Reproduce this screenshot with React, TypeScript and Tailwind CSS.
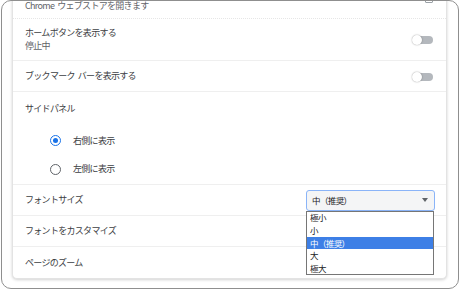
const font = { fontFamily: '"Noto Sans CJK JP", "Noto Sans", sans-serif' }

function Toggle() {
  return (
    <div className="relative flex items-center w-[21px] h-[10px]">
      <div className="ml-[4px] w-[17px] h-[8px] rounded-full bg-[#b4b8bd]" />
      <div className="absolute left-0 top-0 w-[10px] h-[10px] rounded-full bg-white shadow-[0_0_1.5px_rgba(0,0,0,0.45)]" />
    </div>
  )
}

function Radio({ checked }: { checked?: boolean }) {
  return checked ? (
    <div className="w-[11px] h-[11px] rounded-full border-[1.5px] border-[#1a73e8] flex items-center justify-center">
      <div className="w-[5px] h-[5px] rounded-full bg-[#1a73e8]" />
    </div>
  ) : (
    <div className="w-[11px] h-[11px] rounded-full border-[1.5px] border-[#5f6368]" />
  )
}

const sizes = ['極小', '小', '中（推奨）', '大', '極大']

export default function App() {
  return (
    <div className="w-[460px] h-[290px] bg-white" style={font}>
      <div className="ml-[1px] w-[458px] h-[289px] rounded-[10px] border border-[#8f8f8f] overflow-hidden pl-[10px]">
        <div className="-mt-[13px] w-[435px] bg-white border-x border-b border-[#e3e3e3] rounded-b-[5px] shadow-[0_1px_3px_rgba(0,0,0,0.18)] text-[9px] tracking-[-0.7px] text-[#3c4043]">
          {/* cut-off row */}
          <div className="h-[31px] flex items-end justify-between pl-[12px] pr-[13px] border-b border-dotted border-[#e6e6e6]">
            <span className="mb-[6px] text-[#5f6368]">Chrome<span className="ml-[3px]">ウェブストアを開きます</span></span>
            <div className="mb-[15px] w-[8px] h-[8px] border border-[#9aa0a6] rounded-[1px]" />
          </div>

          <div className="h-[42px] flex items-center justify-between pl-[12px] pr-[13px] border-b border-[#efefef]">
            <div className="flex flex-col leading-[13px] -mt-[1px]">
              <span>ホームボタンを表示する</span>
              <span className="text-[#5f6368]">停止中</span>
            </div>
            <Toggle />
          </div>

          <div className="h-[31px] flex items-center justify-between pl-[12px] pr-[13px] border-b border-[#efefef]">
            <span>ブックマーク<span className="ml-[3px]">バーを表示する</span></span>
            <div className="mt-[1px]"><Toggle /></div>
          </div>

          <div className="h-[93px] flex flex-col pl-[12px] border-b border-[#efefef]">
            <div className="h-[34px] flex items-center">サイドパネル</div>
            <div className="h-[30px] flex items-center pl-[25px] gap-[12px]">
              <Radio checked />
              <span>右側に表示</span>
            </div>
            <div className="h-[30px] flex items-center pl-[25px] gap-[12px] -mt-[1px]">
              <Radio />
              <span>左側に表示</span>
            </div>
          </div>

          <div className="h-[31px] flex items-center justify-between pl-[12px] pr-[11px] border-b border-[#efefef]">
            <span>フォントサイズ</span>
            <div className="relative">
              <div className="w-[129px] h-[21px] rounded-[3px] border border-[#8ab4f8] bg-[#f4f5f6] flex items-center justify-between pl-[5px] pr-[6px] text-[8.5px] tracking-[-0.6px] text-[#202124]">
                <span>中（推奨）</span>
                <div className="w-0 h-0 border-x-[3.5px] border-x-transparent border-t-[4px] border-t-[#5f6368]" />
              </div>
              <div className="absolute left-0 top-full w-[128px] bg-white border border-[#767676] z-10 text-[8.5px] tracking-[-0.6px] text-[#202124]">
                {sizes.map(s => (
                  <div
                    key={s}
                    className={`h-[12.6px] flex items-center pl-[3px] ${s === '中（推奨）' ? 'bg-[#3d7fe6] text-white' : ''}`}
                  >
                    {s}
                  </div>
                ))}
              </div>
            </div>
          </div>

          <div className="h-[31px] flex items-center pl-[12px] border-b border-[#efefef]">
            <span>フォントをカスタマイズ</span>
          </div>

          <div className="h-[31px] flex items-center pl-[12px]">
            <span>ページのズーム</span>
          </div>
        </div>
      </div>
    </div>
  )
}
